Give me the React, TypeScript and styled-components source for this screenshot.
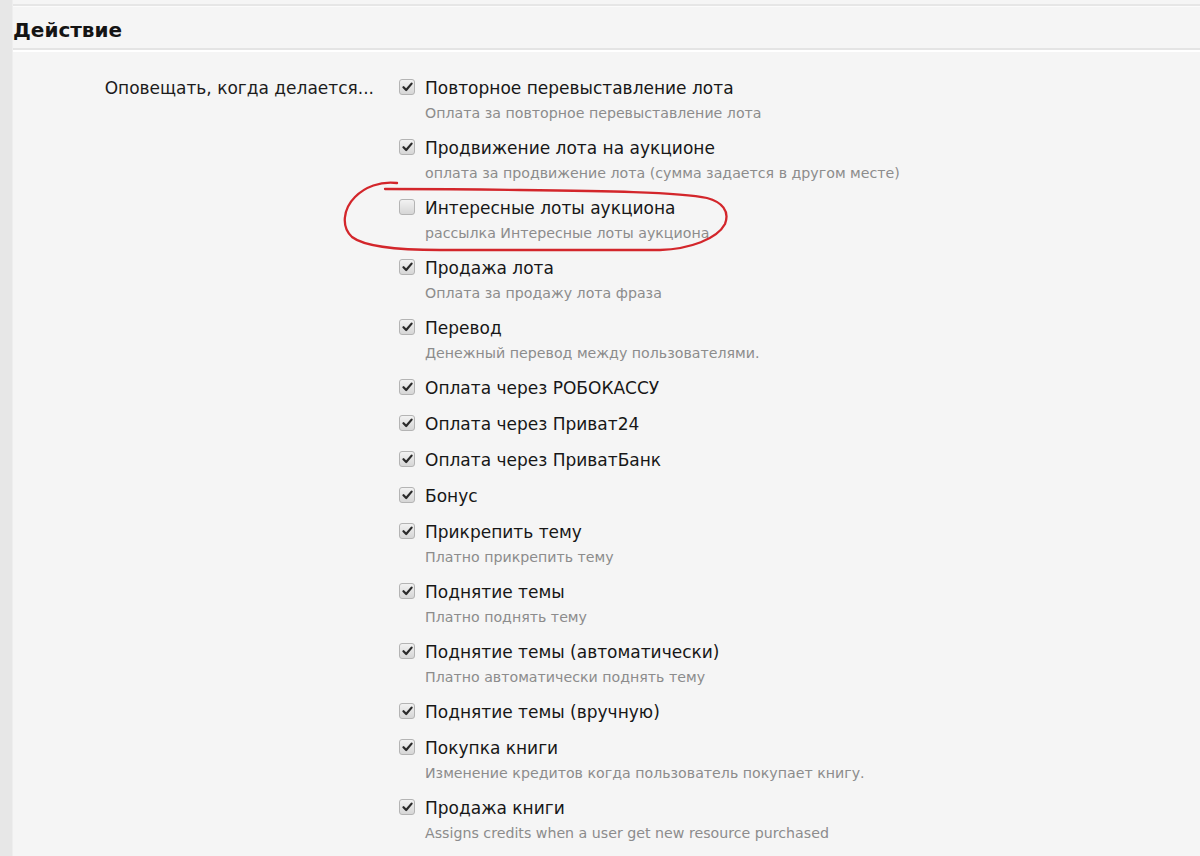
import React from 'react';
import styled, { createGlobalStyle } from 'styled-components';

interface Option {
  label: string;
  hint?: string;
  checked: boolean;
}

const options: Option[] = [
  { label: 'Повторное перевыставление лота', hint: 'Оплата за повторное перевыставление лота', checked: true },
  { label: 'Продвижение лота на аукционе', hint: 'оплата за продвижение лота (сумма задается в другом месте)', checked: true },
  { label: 'Интересные лоты аукциона', hint: 'рассылка Интересные лоты аукциона', checked: false },
  { label: 'Продажа лота', hint: 'Оплата за продажу лота фраза', checked: true },
  { label: 'Перевод', hint: 'Денежный перевод между пользователями.', checked: true },
  { label: 'Оплата через РОБОКАССУ', checked: true },
  { label: 'Оплата через Приват24', checked: true },
  { label: 'Оплата через ПриватБанк', checked: true },
  { label: 'Бонус', checked: true },
  { label: 'Прикрепить тему', hint: 'Платно прикрепить тему', checked: true },
  { label: 'Поднятие темы', hint: 'Платно поднять тему', checked: true },
  { label: 'Поднятие темы (автоматически)', hint: 'Платно автоматически поднять тему', checked: true },
  { label: 'Поднятие темы (вручную)', checked: true },
  { label: 'Покупка книги', hint: 'Изменение кредитов когда пользователь покупает книгу.', checked: true },
  { label: 'Продажа книги', hint: 'Assigns credits when a user get new resource purchased', checked: true },
];

const GlobalStyle = createGlobalStyle`
  html, body {
    margin: 0;
    padding: 0;
    background: #f5f5f5;
  }
  body {
    font-family: Tahoma, "DejaVu Sans", sans-serif;
    color: #1c1c1c;
  }
`;

const CheckMark = () => (
  <svg width="11" height="10" viewBox="0 0 11 10">
    <path d="M1.5 5.2 L4.2 8 L9.6 1.6" fill="none" stroke="#2a2a2a" strokeWidth="2.2" strokeLinecap="round" strokeLinejoin="round" />
  </svg>
);

// hand drawn red loop around the third option
const Scribble = () => (
  <ScribbleSvg width="410" height="90" viewBox="0 0 410 90">
    <path
      d="M67 14 C50 12 35 18 25 28 C13 40 11 58 22 68 C35 78 70 81 110 81 L330 81 C360 80 387 70 395 55 C400 42 392 33 377 29 C350 23 270 22 190 21 C130 20 90 20 55 20"
      fill="none"
      stroke="#d3262b"
      strokeWidth="2.3"
      strokeLinecap="round"
    />
  </ScribbleSvg>
);

const App: React.FC = () => {
  return (
    <>
      <GlobalStyle />
      <Page>
        <Rail />
        <Main>
          <SectionHeader>
            <Title>Действие</Title>
          </SectionHeader>
          <FormRow>
            <RowLabel>Оповещать, когда делается...</RowLabel>
            <OptionList>
              {options.map((o, i) => (
                <OptionItem key={i}>
                  <Box checked={o.checked}>{o.checked && <CheckMark />}</Box>
                  <OptionText>
                    <OptionLabel>{o.label}</OptionLabel>
                    {o.hint && <OptionHint>{o.hint}</OptionHint>}
                  </OptionText>
                  {i === 2 && <Scribble />}
                </OptionItem>
              ))}
            </OptionList>
          </FormRow>
        </Main>
      </Page>
    </>
  );
};

const Page = styled.div`
  display: flex;
  min-height: 856px;
  background: #f5f5f5;
`;

const Rail = styled.div`
  width: 12px;
  flex-shrink: 0;
  background: #e7e7e7;
  border-right: 1px solid #eeeeee;
`;

const Main = styled.div`
  flex: 1;
  padding-top: 4px;
`;

const SectionHeader = styled.div`
  border-top: 2px solid #e6e6e6;
  border-bottom: 2px solid #e4e4e4;
  box-shadow: inset 0 1px 0 #fbfbfb, 0 2px 0 #ffffff;
  height: 42px;
  display: flex;
  align-items: center;
`;

const Title = styled.h2`
  margin: 0;
  font-size: 20px;
  font-weight: 700;
  color: #141414;
  padding-top: 6px;
`;

const FormRow = styled.div`
  display: grid;
  grid-template-columns: 361px 1fr;
  column-gap: 25px;
  padding-top: 26px;
`;

const RowLabel = styled.div`
  text-align: right;
  font-size: 17px;
  line-height: 24px;
  color: #1c1c1c;
`;

const OptionList = styled.ul`
  list-style: none;
  margin: 0;
  padding: 0;
  display: flex;
  flex-direction: column;
  gap: 12px;
`;

const OptionItem = styled.li`
  position: relative;
  display: flex;
  align-items: flex-start;
  gap: 10px;
`;

const Box = styled.span<{ checked: boolean }>`
  width: 14px;
  height: 14px;
  margin-top: 3px;
  flex-shrink: 0;
  border: 1px solid #b4b4b4;
  border-radius: 3px;
  background: linear-gradient(#f2f2f2, #d6d6d6);
  display: flex;
  align-items: center;
  justify-content: center;
`;

const OptionText = styled.div`
  display: flex;
  flex-direction: column;
`;

const OptionLabel = styled.span`
  font-size: 17px;
  line-height: 24px;
  color: #171717;
`;

const OptionHint = styled.span`
  font-size: 14.2px;
  line-height: 22px;
  padding-top: 2px;
  color: #8c8c8c;
`;

const ScribbleSvg = styled.svg`
  position: absolute;
  left: -69px;
  top: -27px;
  pointer-events: none;
`;

export default App;
